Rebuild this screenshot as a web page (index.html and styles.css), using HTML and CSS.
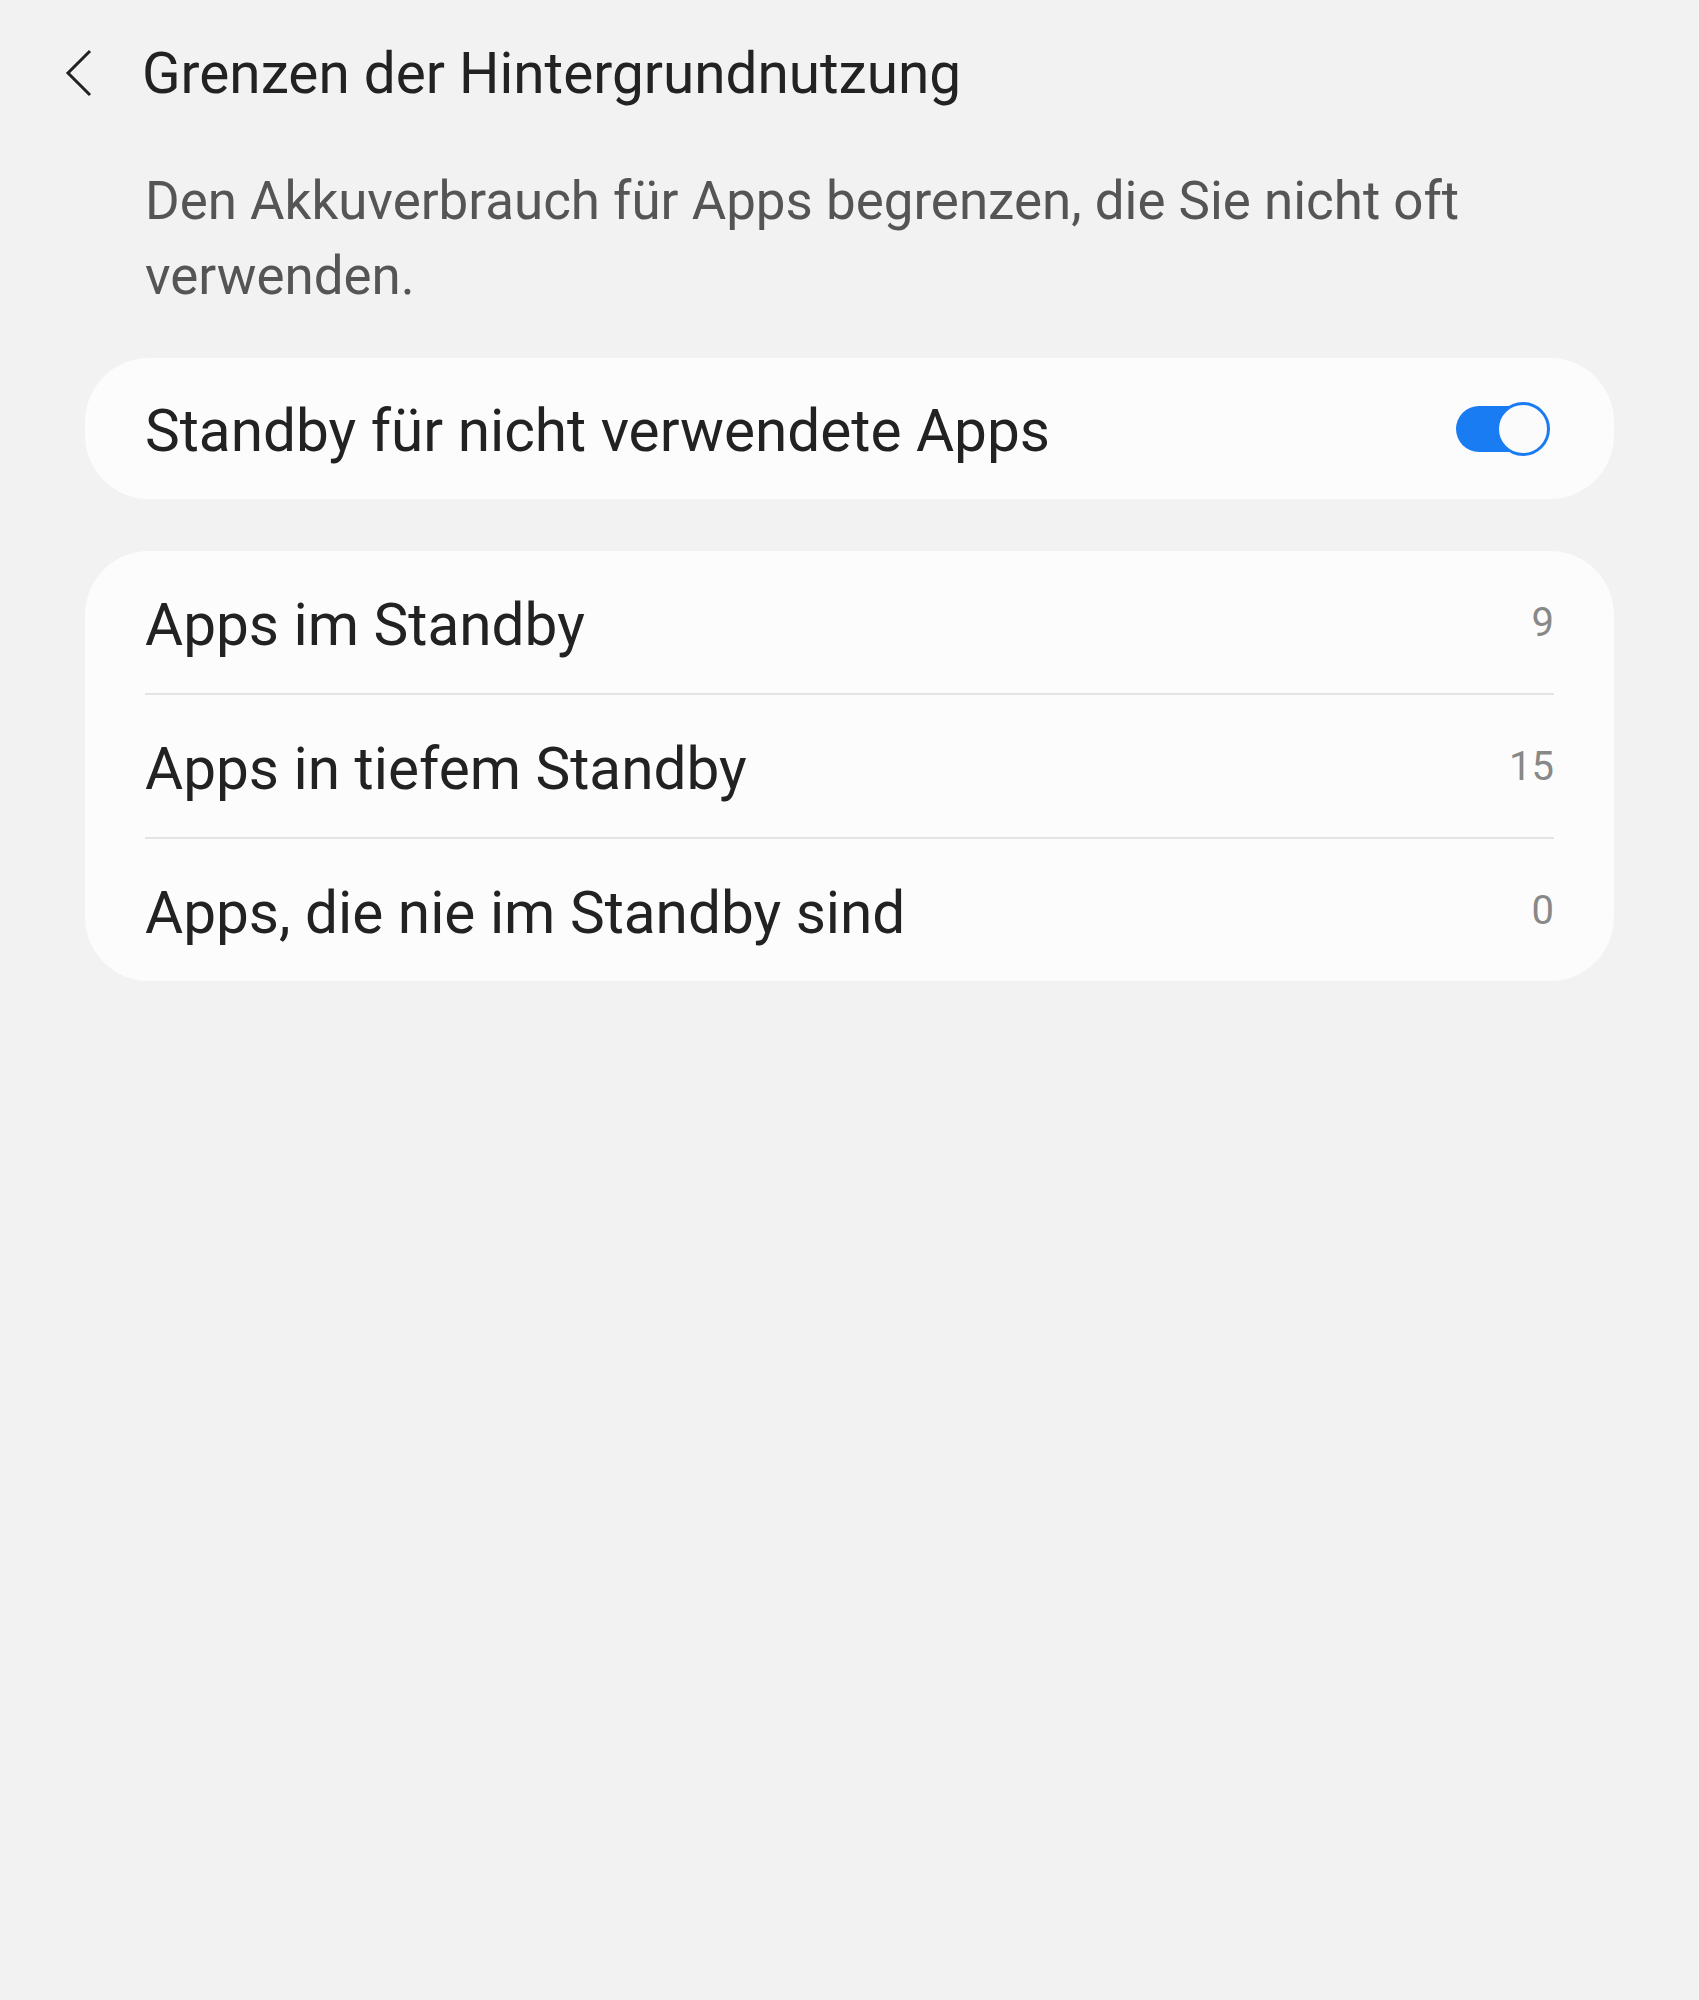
FILE: index.html
```html
<!DOCTYPE html>
<html lang="de">

<head>
    <meta charset="UTF-8">
    <meta name="viewport" content="width=device-width, initial-scale=1.0">
    <title>Grenzen der Hintergrundnutzung</title>
    <link rel="stylesheet" href="styles.css">
</head>

<body>
    <header class="topbar">
        <button class="back" aria-label="Zurück">
            <svg width="30" height="48" viewBox="0 0 30 48">
                <polyline points="26,2 4,24 26,46" fill="none" stroke="#222" stroke-width="3" stroke-linejoin="miter" />
            </svg>
        </button>
        <h1 class="title">Grenzen der Hintergrundnutzung</h1>
    </header>

    <p class="intro">Den Akkuverbrauch für Apps begrenzen, die Sie nicht oft verwenden.</p>

    <!-- Main switch -->
    <section class="card">
        <div class="row switch-row">
            <span class="label">Standby für nicht verwendete Apps</span>
            <span class="toggle on"><span class="thumb"></span></span>
        </div>
    </section>

    <!-- App lists -->
    <section class="card">
        <div class="row">
            <span class="label">Apps im Standby</span>
            <span class="count">9</span>
        </div>
        <div class="row">
            <span class="label">Apps in tiefem Standby</span>
            <span class="count">15</span>
        </div>
        <div class="row">
            <span class="label">Apps, die nie im Standby sind</span>
            <span class="count">0</span>
        </div>
    </section>
</body>

</html>
```
FILE: styles.css
```css
/* General Styles */
body {
    font-family: Roboto, "Noto Sans", Arial, sans-serif;
    background-color: #f2f2f2;
    color: #222;
    margin: 0;
    padding: 0 85px;
}

/* Header */
.topbar {
    display: flex;
    align-items: center;
    height: 146px;
    margin-left: -21px;
}

.back {
    background: none;
    border: none;
    padding: 0;
    width: 30px;
    height: 48px;
    display: flex;
}

.title {
    margin: 0 0 0 48px;
    font-size: 56.7px;
    font-weight: 400;
    color: #222;
}

.intro {
    margin: 0;
    padding: 18px 60px 0 60px;
    font-size: 52.9px;
    line-height: 75px;
    color: #555;
}

/* Cards */
.card {
    background: #fcfcfc;
    border-radius: 64px;
    padding: 0 60px;
}

.intro + .card {
    margin-top: 44px;
}

.card + .card {
    margin-top: 52px;
}

.row {
    display: flex;
    align-items: center;
    justify-content: space-between;
    height: 142px;
}

.row + .row {
    border-top: 2px solid #e4e4e4;
}

.switch-row {
    height: 141px;
}

.label {
    font-size: 58.5px;
    padding-top: 5px;
}

.count {
    font-size: 40px;
    color: #888;
}

/* Toggle */
.toggle {
    position: relative;
    width: 92px;
    height: 46px;
    border-radius: 23px;
    background: #1a7cf3;
    margin-right: 6px;
}

.thumb {
    position: absolute;
    right: -2px;
    top: -4px;
    width: 48px;
    height: 48px;
    border-radius: 50%;
    background: #fbfbfb;
    border: 3px solid #1a7cf3;
}
```
